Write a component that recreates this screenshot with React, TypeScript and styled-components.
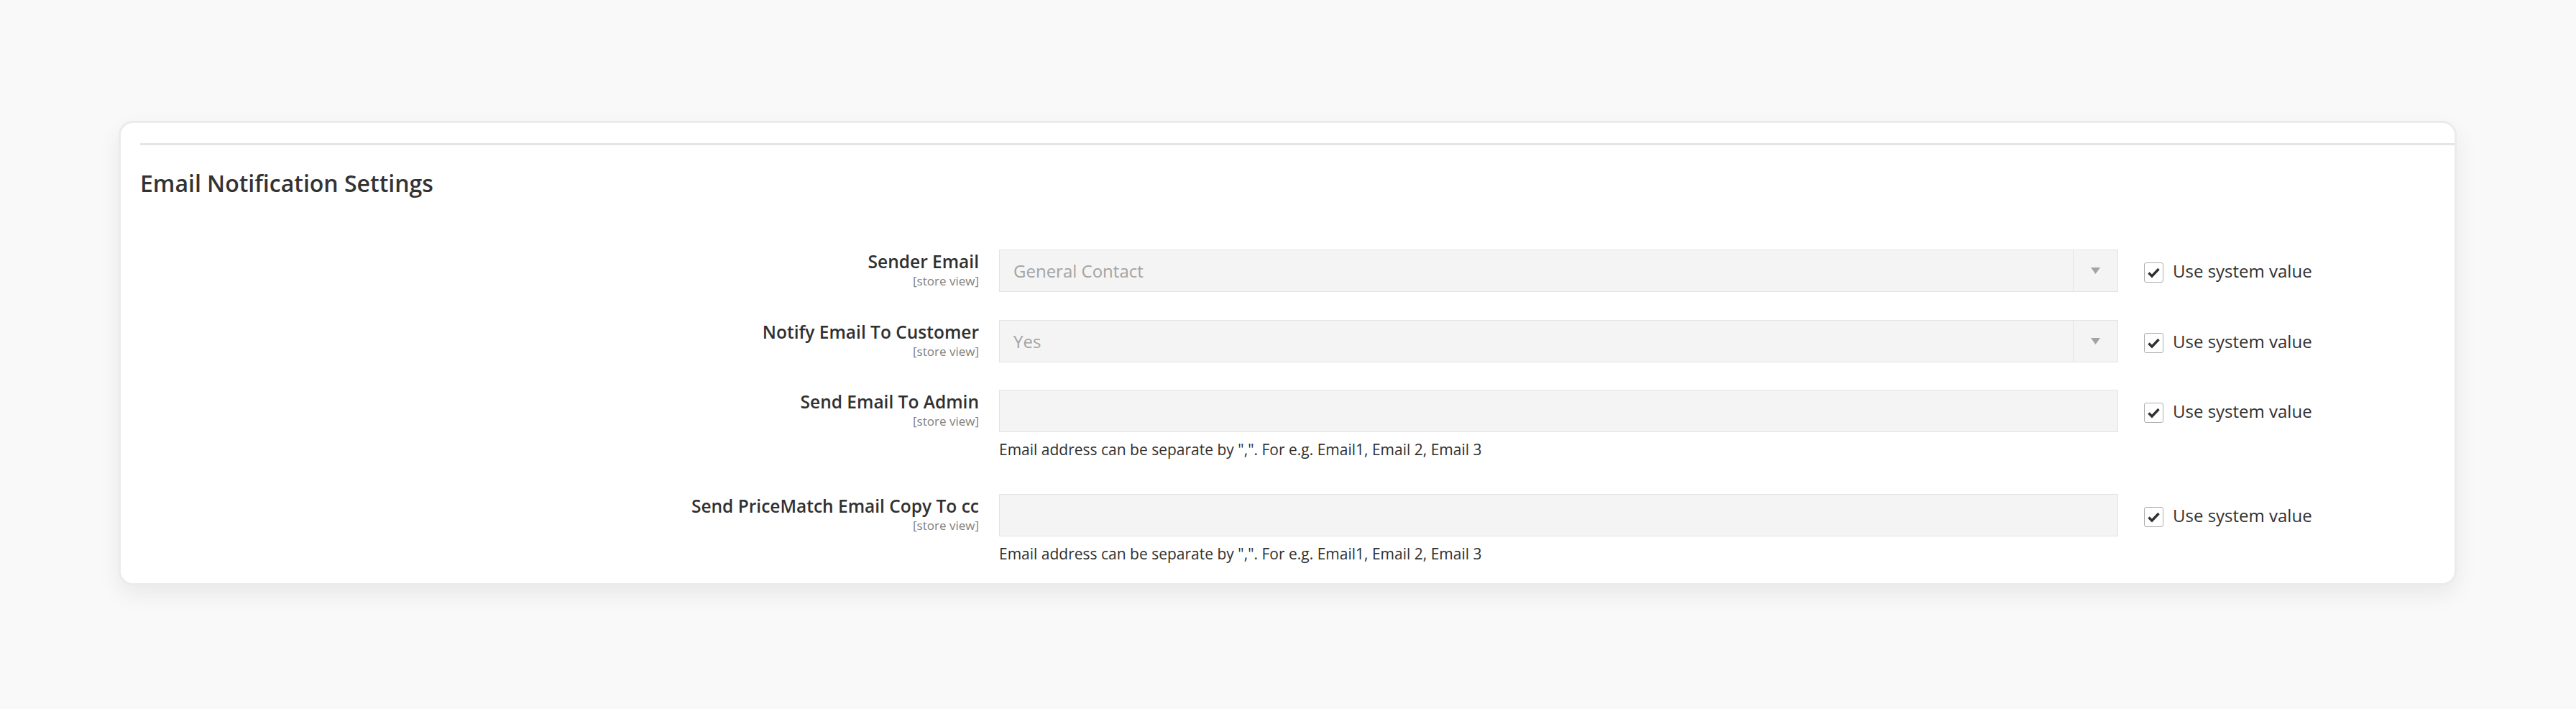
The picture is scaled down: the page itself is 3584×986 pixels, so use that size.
import React from 'react';
import styled, { createGlobalStyle } from 'styled-components';

const GlobalStyle = createGlobalStyle`
  html, body { margin: 0; padding: 0; background: #f9f9f9; }
  body { font-family: "Open Sans", "Liberation Sans", Arial, sans-serif; color: #303030; }
  * { box-sizing: border-box; }
`;

const Page = styled.div`
  width: 3584px;
  height: 986px;
  padding: 168px 166px 0 165px;
  background: #f9f9f9;
`;

const Card = styled.section`
  background: #fff;
  border: 3px solid #ebebeb;
  border-radius: 20px;
  box-shadow: 0 12px 32px rgba(0, 0, 0, 0.07);
  padding: 28px 0 18px 27px;
`;

const Divider = styled.div`
  height: 3px;
  background: #e5e5e5;
`;

const Title = styled.h2`
  margin: 31px 0 0;
  font-size: 32px;
  line-height: 44px;
  font-weight: 600;
  color: #333333;
`;

const Fieldset = styled.div`
  margin-top: 70px;
  display: flex;
  flex-direction: column;
  gap: 38.5px;
`;

const Row = styled.div`
  display: flex;
  align-items: flex-start;
`;

const LabelCell = styled.div`
  flex: none;
  width: 1195px;
  padding: 2px 28px 0 0;
  text-align: right;
`;

const LabelText = styled.div`
  font-size: 24.5px;
  line-height: 30px;
  font-weight: 600;
  color: #303030;
`;

const Scope = styled.div`
  font-size: 17px;
  line-height: 23px;
  color: #808080;
`;

const ControlCell = styled.div`
  flex: none;
  width: 1557px;
`;

const Field = styled.div`
  height: 59px;
  border: 1px solid #e3e3e3;
  background: #f4f4f4;
  display: flex;
  align-items: center;
  padding-left: 19px;
  font-size: 24px;
  color: #a3a3a3;
`;

const FieldValue = styled.span`
  flex: 1;
  white-space: nowrap;
`;

const ArrowBox = styled.div`
  flex: none;
  width: 62px;
  height: 100%;
  border-left: 1px solid #e3e3e3;
  display: flex;
  align-items: center;
  justify-content: center;
`;

const Note = styled.div`
  margin: 10px 0 9px;
  font-size: 21px;
  line-height: 28px;
  color: #303030;
`;

const UseDefault = styled.label`
  flex: none;
  height: 59px;
  display: flex;
  align-items: center;
  gap: 13px;
  padding-left: 36px;
  font-size: 24px;
  color: #303030;
  white-space: nowrap;
`;

const CheckBox = styled.span`
  flex: none;
  width: 27px;
  height: 28px;
  margin-top: 5px;
  border: 1px solid #adadad;
  border-radius: 3px;
  background: #fff;
  display: flex;
  align-items: center;
  justify-content: center;
`;

const Check = () => (
  <svg width="19" height="16" viewBox="0 0 19 16">
    <path d="M2.5 8.5 L7 13 L16.5 3" fill="none" stroke="#303030" strokeWidth="3.4" strokeLinejoin="miter" />
  </svg>
);

const Arrow = () => (
  <svg width="13" height="9" viewBox="0 0 13 9">
    <polygon points="0,0 13,0 6.5,9" fill="#a3a3a3" />
  </svg>
);

type FieldDef = {
  label: string;
  kind: 'select' | 'text';
  value?: string;
  note?: string;
};

const NOTE = 'Email address can be separate by ",". For e.g. Email1, Email 2, Email 3';

const fields: FieldDef[] = [
  { label: 'Sender Email', kind: 'select', value: 'General Contact' },
  { label: 'Notify Email To Customer', kind: 'select', value: 'Yes' },
  { label: 'Send Email To Admin', kind: 'text', note: NOTE },
  { label: 'Send PriceMatch Email Copy To cc', kind: 'text', note: NOTE },
];

export default function App() {
  return (
    <>
      <GlobalStyle />
      <Page>
        <Card>
          <Divider />
          <Title>Email Notification Settings</Title>
          <Fieldset>
            {fields.map((f) => (
              <Row key={f.label}>
                <LabelCell>
                  <LabelText>{f.label}</LabelText>
                  <Scope>[store view]</Scope>
                </LabelCell>
                <ControlCell>
                  <Field>
                    <FieldValue>{f.value ?? ''}</FieldValue>
                    {f.kind === 'select' && (
                      <ArrowBox>
                        <Arrow />
                      </ArrowBox>
                    )}
                  </Field>
                  {f.note && <Note>{f.note}</Note>}
                </ControlCell>
                <UseDefault>
                  <CheckBox>
                    <Check />
                  </CheckBox>
                  Use system value
                </UseDefault>
              </Row>
            ))}
          </Fieldset>
        </Card>
      </Page>
    </>
  );
}
